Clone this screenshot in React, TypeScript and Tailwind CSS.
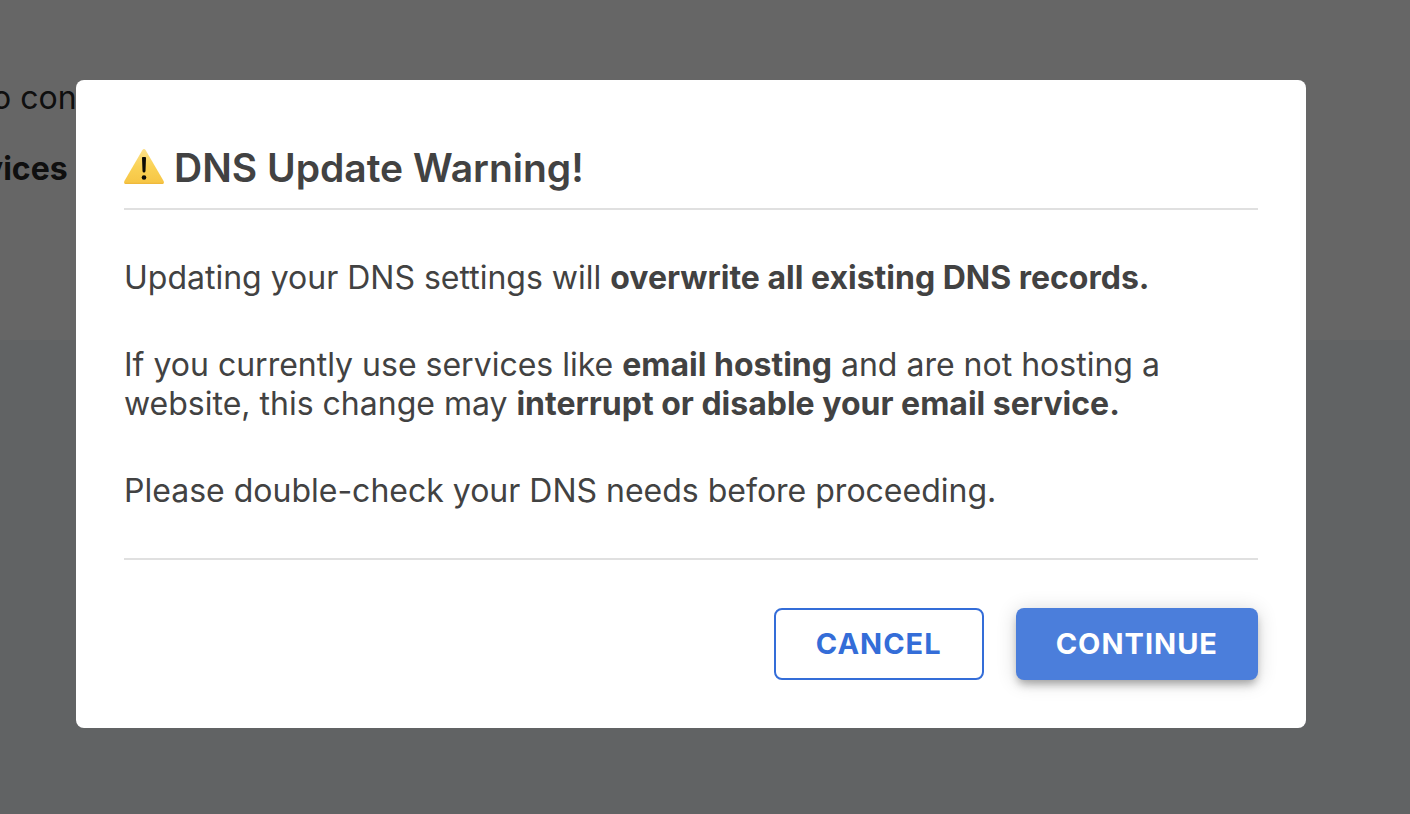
import { useState } from 'react';

function WarningIcon() {
  return (
    <svg className="w-10 h-10 shrink-0" viewBox="0 0 40 40" aria-hidden="true">
      <defs>
        <linearGradient id="warning-fill" x1="0" y1="0" x2="0" y2="1">
          <stop offset="0" stopColor="#fbe08a" />
          <stop offset="0.5" stopColor="#fad255" />
          <stop offset="1" stopColor="#f6c544" />
        </linearGradient>
      </defs>
      <path
        d="M18.3 2.2Q20 -0.2 21.7 2.2L39.6 33Q40.6 36 38 36H2Q-0.6 36 0.4 33Z"
        fill="url(#warning-fill)"
      />
      <path d="M0.6 34.8Q0.8 36 2 36H38Q39.2 36 39.4 34.8Z" fill="#efb93c" />
      <path d="M18 10Q17.9 9 18.9 9H21.1Q22.1 9 22 10L21.5 23Q21.4 24.6 20 24.6Q18.6 24.6 18.5 23Z" fill="#0d0b05" />
      <circle cx="20" cy="29.5" r="2.3" fill="#0d0b05" />
    </svg>
  );
}

function PageContent() {
  return (
    <div className="min-h-screen bg-[#f3f7fb] overflow-hidden">
      <div className="h-[340px] bg-white pt-[78px] -ml-2 text-[32px] leading-[39px] text-[#262626] whitespace-nowrap">
        <p className="mb-8">o con</p>
        <p className="-ml-2 font-bold">vices o</p>
      </div>
    </div>
  );
}

interface DnsWarningDialogProps {
  onCancel: () => void;
  onContinue: () => void;
}

function DnsWarningDialog({ onCancel, onContinue }: DnsWarningDialogProps) {
  return (
    <div className="fixed inset-0 bg-black/60 overflow-y-auto pt-20 pb-20 pl-[76px] pr-[104px]">
      <div
        role="dialog"
        aria-modal="true"
        aria-labelledby="dns-warning-title"
        className="bg-white rounded-lg p-12 text-[#424242]"
      >
        <div className="flex items-center gap-2.5 py-4 border-b-2 border-[#e0e0e0]">
          <WarningIcon />
          <h2 id="dns-warning-title" className="text-[39px] leading-[48px] font-semibold">
            DNS Update Warning!
          </h2>
        </div>

        <div className="py-12 flex flex-col gap-12 text-[32px] leading-[39px] border-b-2 border-[#e0e0e0]">
          <p>
            Updating your DNS settings will <strong className="font-bold">overwrite all existing DNS records.</strong>
          </p>
          <p>
            If you currently use services like <strong className="font-bold">email hosting</strong> and are not hosting a
            website, this change may <strong className="font-bold">interrupt or disable your email service.</strong>
          </p>
          <p>Please double-check your DNS needs before proceeding.</p>
        </div>

        <div className="flex justify-end gap-8 pt-12">
          <button
            type="button"
            onClick={onCancel}
            className="h-[72px] px-10 rounded-lg border-2 border-[#346dd8] bg-white text-[#346dd8] text-[29px] font-bold tracking-[1px] uppercase"
          >
            Cancel
          </button>
          <button
            type="button"
            onClick={onContinue}
            className="h-[72px] px-10 rounded-lg bg-[#4b7edb] text-white text-[29px] font-bold tracking-[1px] uppercase shadow-[0_6px_8px_-2px_rgba(0,0,0,0.3),0_2px_20px_rgba(0,0,0,0.16)]"
          >
            Continue
          </button>
        </div>
      </div>
    </div>
  );
}

export default function App() {
  const [open, setOpen] = useState(true);

  return (
    <div className="font-['Inter',sans-serif]">
      <PageContent />
      {open && <DnsWarningDialog onCancel={() => setOpen(false)} onContinue={() => setOpen(false)} />}
    </div>
  );
}
